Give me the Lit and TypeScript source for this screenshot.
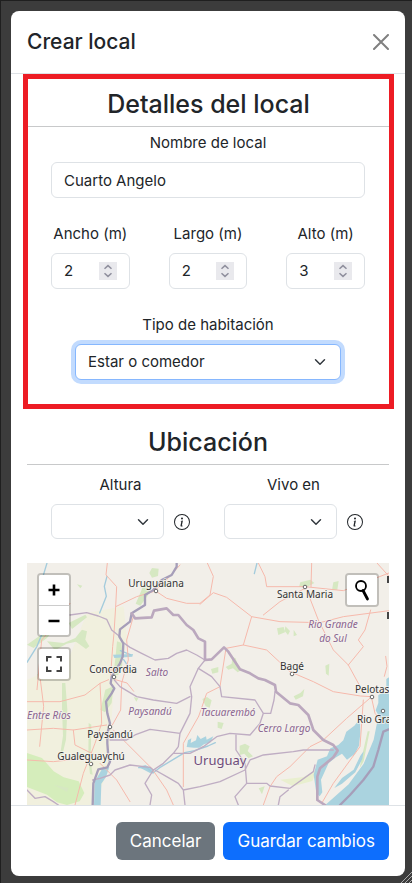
import { LitElement, html, svg, css } from "lit";
import { customElement, property } from "lit/decorators.js";

const base = css`
  *, *::before, *::after { box-sizing: border-box; }
  button, input, select { font: inherit; color: inherit; margin: 0; }
`;

@customElement("number-field")
class NumberField extends LitElement {
  @property() label = "";
  @property() value = "";

  static styles = [base, css`
    :host { display: flex; flex-direction: column; align-items: center; gap: 7px; min-width: 0; }
    .label { line-height: 24px; white-space: nowrap; }
    .box {
      display: flex; align-items: center; width: 100%; height: 36px; padding: 0 12px;
      border: 1px solid #dee2e6; border-radius: 6px; background: #fff;
    }
    .input {
      flex: 1; min-width: 0; width: 0; padding: 0; border: 0; outline: 0; background: none;
      appearance: textfield; -moz-appearance: textfield;
    }
    .input::-webkit-inner-spin-button { appearance: none; margin: 0; }
    .spin { display: block; width: 18px; height: 18px; background: #e9e9ed; }
  `];

  render() {
    return html`
      <label class="label" for="n">${this.label}</label>
      <div class="box">
        <input class="input" id="n" type="number" .value=${this.value} />
        <svg class="spin" viewBox="0 0 18 18" fill="none" stroke="#8f8f9d" stroke-width="1.5" aria-hidden="true">
          <path d="M5.5 6.8 9 3.6l3.5 3.2M5.5 11.2 9 14.4l3.5-3.2" />
        </svg>
      </div>
    `;
  }
}

@customElement("info-select")
class InfoSelect extends LitElement {
  @property() label = "";

  static styles = [base, css`
    :host { display: grid; grid-template-columns: 1fr 16px; column-gap: 10px; row-gap: 7px; align-items: center; }
    .label { grid-column: 1 / -1; text-align: center; line-height: 24px; }
    .select {
      width: 100%; height: 35px; padding: 0 36px 0 12px; appearance: none;
      border: 1px solid #dee2e6; border-radius: 6px;
      background: #fff url("data:image/svg+xml,%3Csvg xmlns='http://www.w3.org/2000/svg' viewBox='0 0 16 16'%3E%3Cpath fill='none' stroke='%23343a40' stroke-linecap='round' stroke-linejoin='round' stroke-width='2' d='m2 5 6 6 6-6'/%3E%3C/svg%3E") no-repeat right 12px center / 16px 12px;
    }
    .info { display: block; width: 16px; height: 16px; }
  `];

  render() {
    return html`
      <label class="label" for="s">${this.label}</label>
      <select class="select" id="s"><option></option></select>
      <svg class="info" viewBox="0 0 16 16" fill="#212529" aria-hidden="true">
        <path d="M8 15A7 7 0 1 1 8 1a7 7 0 0 1 0 14m0 1A8 8 0 1 0 8 0a8 8 0 0 0 0 16" />
        <path d="m8.930 6.588-2.290.287-.082.380.450.083c.294.070.352.176.288.469l-.738 3.468c-.194.897.105 1.319.808 1.319.545 0 1.178-.252 1.465-.598l.088-.416c-.200.176-.492.246-.686.246-.275 0-.375-.193-.304-.533zM9 4.500a1 1 0 1 1-2 0 1 1 0 0 1 2 0" />
      </svg>
    `;
  }
}

const places: [number, number, string, string][] = [
  [129, 24, "town", "Uruguaiana"],
  [278, 35, "town", "Santa Maria"],
  [265, 107, "town", "Bagé"],
  [86, 110, "town", "Concordia"],
  [83, 175, "town", "Paysandú"],
  [64, 197, "town", "Gualeguaychú"],
  [328, 130, "town start", "Pelotas"],
  [330, 160, "town start", "Rio Grande"],
  [306, 65, "region", "Rio Grande"],
  [306, 79, "region", "do Sul"],
  [130, 113, "region", "Salto"],
  [123, 152, "region", "Paysandú"],
  [201, 153, "region", "Tacuarembó"],
  [257, 169, "region", "Cerro Largo"],
  [0, 156, "region start", "Entre Ríos"],
  [193, 202, "country", "Uruguay"],
];

const dots: [number, number][] = [[129, 28], [278, 24], [265, 111], [87, 114], [83, 164], [64, 201], [345, 134], [356, 148]];

@customElement("area-map")
class AreaMap extends LitElement {
  static styles = [base, css`
    :host { display: grid; position: relative; overflow: hidden; background: #f2efe9; }
    .map { display: block; width: 100%; height: 100%; min-height: 242px; }
    .line { fill: none; stroke-linejoin: round; stroke-linecap: round; }
    .road { stroke: #f6b9ac; stroke-width: 3; }
    .dept { stroke: #bfadc3; stroke-width: 4; }
    .border { stroke: #bba8be; stroke-width: 8; }
    .river { stroke: #a69eb9; stroke-width: 7; }
    .stream { stroke: #a3cbdc; stroke-width: 4; }
    .water { fill: #aad3df; }
    .town, .region, .country { font-family: "Noto Sans", sans-serif; font-size: 10px; text-anchor: middle; paint-order: stroke; stroke: #f6f4f0; stroke-width: 2px; stroke-opacity: 0.7; fill: #333; }
    .region { font-style: italic; fill: #8b6590; }
    .country { font-size: 13px; fill: #6f4c7c; }
    .start { text-anchor: start; }
    .dot { fill: #fff; stroke: #666; }
    .tools { position: absolute; top: 10px; display: flex; flex-direction: column; gap: 10px; }
    .left { left: 10px; }
    .right { right: 10px; }
    .group { border: 2px solid rgba(0, 0, 0, 0.2); border-radius: 4px; background-clip: padding-box; overflow: hidden; }
    .tool { display: grid; place-items: center; width: 30px; height: 30px; padding: 0; border: 0; background: #fff; cursor: pointer; }
    .tool + .tool { border-top: 1px solid #ccc; }
  `];

  render() {
    return html`
      <svg class="map" viewBox="0 0 362 242" preserveAspectRatio="xMinYMin slice" role="img" aria-label="Mapa">
        <g transform="scale(.33333)">
          <path fill="#f1f0de" d="M0 350 120 300 180 150 290 130 300 230 285 300 260 380 250 520 245 620 200 726H0Z" />
          <g fill="#d6e8c2">
            <path fill="#d5edbb" d="M0 570 45 585 80 625 110 643 155 655 172 690 158 715 120 726 90 718 60 695 0 672Z" />
            <path d="M80 665l45 10-5 12zM60 235l50 5 35-15 20-25 15 5-5 25 12 20-10 8-30-22-28 6-35 20zM30 335l60-40 35-20-10 25-50 30-20 20zM0 245l50-35 30-10-20 25-40 30zM125 180l50-25 5 8-45 35z" />
            <path d="M105 360l10 0 6 80-4 90-12 50-6-2 9-60-3-80zM185 480l8 5-2 110 6 40-8-2-5-50z" />
            <path d="M375 15l20 2-2 22-18 5-8-14zM350 65l20 5-8 28-22 30-14-6 14-32zM270 235l14 5 2 65-12 30-15 2 6-50zM235 380l24-10-5 50-20 28-14-8 8-30z" />
            <path d="M820 58l30-8 12 10-22 12-24 0zM919 58l16-4-4 26-16 2zM750 196l20-4 4 16-20 8zM775 190l14 14-6 12-10-12zM800 200l10 16-10 4zM895 308l12-6-2 36-8-6zM552 318l22-6 0 16-18 4zM596 312l18-10 2-20 10 4 8 26 8 10-10 6-14-12-14 4zM638 548l16-6 14 8-6 14 16 16-14 6-12-14-14 4zM572 476l18 4-6 18-12-4zM526 408l14-6 14 10-6 22-12-4zM800 400l20-10 12-12-4 22-22 10zM320 402l14 4-6 10zM1022 505l6 0-18 90-12 20 8-40zM150 64l16 4-6 8zM695 676l18-6-8 24z" />
            <path fill="#e9efcf" d="M760 650l70-8 40-22-14 34-58 16z" />
          </g>
          <g class="water">
            <path d="M999 468 982 488 958 506 949 532 934 546 910 556 900 580 872 590 860 635 868 690 878 700 886 688 882 650 905 600 925 584 945 572 960 590 984 572 996 548 1000 510Z" />
            <path d="M1086 460 1050 480 1040 530 1010 602 965 664 895 726H1086Z" />
            <path d="M1054 396 1070 388 1086 392V462L1064 474 1046 442 1054 420Z" />
            <path d="M1010 565 1000 578 980 620 945 645 922 675 945 662 985 628 1006 588Z" />
            <path d="M479 552l4-20 10-6-2 14 16-8 4-16 10 12 16-8 2 10 20-10-8 18-20 6-14 10-16 0zM335 612l20-6 18 10 12 12-16 2zM225 618l22-6-10 30-14 20-2 64h-20l2-70zM258 275l60-2-2 8-54 4zM1078 348l8-5v28h-8z" />
          </g>
          <g class="line stream">
            <path d="M60 0 48 40 40 100 50 200 30 250 0 298M335 614l25 0 18 16 20-16 50-30 25-15 30-6 40-14 22-10M240 40l-8 30 6 30-20 50M690 0l-8 32M310 275l-30-12M290 290l12 18" />
          </g>
          <g class="line road">
            <path d="M241 0 237 36 269 71 266 131 261 211 257 251 251 336M266 131 329 101 379 86 409 61 459 6M389 86 419 106 479 121 519 121 549 96 559 40 541 0M319 161 299 231 304 291 284 360 281 441 256 486M129 121 79 191 44 231 30 380M265 350 300 360 320 385" />
            <path d="M694 0 714 41 719 71 834 71 949 83 1086 30M854 0 852 71M1050 0 1086 40M519 124 559 89 599 103 674 161 759 176 879 179 949 161 1086 143M834 76 759 116 709 156M674 161 649 246 597 256 579 371 539 391 515 460M649 246 719 261 789 326 859 356 919 386 1000 399 1034 401M839 81 874 171 919 261 964 306 1010 390M1031 141 1014 201 994 231 1009 251 964 306M1076 280l4 30-8 30" />
            <path d="M0 416 99 416 174 396 219 361 245 350M219 361 222 420 224 481 204 541 169 631 144 726M0 501 79 496 139 501 239 486M139 501 144 546 204 576M259 501 299 541 374 616 419 681 439 726M515 460 469 541 469 671M219 601 269 651 309 716M0 591 79 596 180 585M40 350l10 80-12 120" />
            <path d="M1034 401 959 466 889 531 849 551 789 611 749 641 729 671 709 726M1009 411 1004 481 999 551 919 661 884 721M1034 406 1044 451 1069 481" />
          </g>
          <g class="line dept">
            <path d="M129 156 179 149 214 159 239 169 254 201 279 221M289 239 309 253 344 271 384 291 424 286 449 271 479 261 509 276 534 291M534 291 514 316 489 371 494 401 489 451 459 511 454 551 439 571M262 351 279 371 329 401 379 411 449 421 489 401M249 531 299 531 324 516 369 499 459 511M197 651 219 646 249 636 264 621 309 606 369 613 379 621 409 601 439 571 489 571 529 551" />
            <path d="M379 621 354 661 374 696 369 726M384 621 419 641 454 661 469 681 474 726M469 681 519 671 579 656 654 621 669 591 709 576 799 566 829 561 919 561M514 316 554 341 579 371 584 401 684 411 709 451 731 451 741 411 744 386M709 451 699 481 669 516 609 511 569 521 529 551" />
            <path d="M627 516 627 561 654 601 659 661 624 701 634 726M659 661 719 661 729 669 789 676 859 626 864 606M784 681 759 701 754 726" />
            <path d="M0 681 24 706 54 701 79 716 94 726" />
          </g>
          <path class="line river" d="M449 0 449 11 434 36 404 51 379 81 354 96 354 126 314 151 309 176 279 199 277 221 289 241 287 281 279 301 254 341 251 361 262 376 254 391 237 416 241 451 249 481 241 511 241 541 244 581 249 596 241 613 214 619 199 661 197 726" />
          <path class="line border" d="M314 151 324 166 374 163 381 143 419 136 439 156 454 156 479 186 499 201 514 226 534 236 534 291 554 289 591 253 604 266 624 296 639 319 669 331 694 346 714 351 744 366 747 386 789 421 814 426 844 456 859 501 889 531 919 546 932 563 919 583 879 616 871 641 871 711 894 726" />
          <path class="line river" d="M1086 499 1069 506 1054 561 1039 611 1009 651 969 696 939 726" />
        </g>
        ${dots.map(([x, y]) => svg`<circle class="dot" cx=${x} cy=${y} r="1.8" />`)}
        ${places.map(([x, y, kind, name]) => svg`<text class=${kind} x=${x} y=${y}>${name}</text>`)}
        <path d="M361 13v7M361 49v7" stroke="#444" stroke-width="2" />
      </svg>
      <div class="tools left">
        <div class="group">
          <button class="tool" aria-label="Acercar"><svg width="12" height="12" viewBox="0 0 12 12"><path d="M6 .5v11M.5 6h11" stroke="#000" stroke-width="2.600" /></svg></button>
          <button class="tool" aria-label="Alejar"><svg width="12" height="12" viewBox="0 0 12 12"><path d="M.5 6h11" stroke="#000" stroke-width="2.600" /></svg></button>
        </div>
        <div class="group">
          <button class="tool" aria-label="Pantalla completa"><svg width="16" height="16" viewBox="0 0 16 16" fill="none" stroke="#444" stroke-width="2"><path d="M1 5.500V1h4.500M10.500 1H15v4.500M15 10.500V15h-4.500M5.500 15H1v-4.500" /></svg></button>
        </div>
      </div>
      <div class="tools right">
        <div class="group">
          <button class="tool" aria-label="Buscar"><svg width="18" height="22" viewBox="0 0 18 22" fill="none" stroke="#000"><circle cx="8" cy="7" r="5" stroke-width="1.800" /><path d="M10 11.500 14.500 20" stroke-width="2.800" stroke-linecap="round" /></svg></button>
        </div>
      </div>
    `;
  }
}

@customElement("app-root")
class AppRoot extends LitElement {
  static styles = [base, css`
    :host {
      display: flex; position: relative; min-height: 100vh; padding: 11px 7px 7px 11px;
      background: #3c3c3c; box-shadow: inset 1px 1px 0 #1f1f1f;
      box-sizing: border-box; color: #212529;
      font-family: Inter, sans-serif; font-size: 15px; line-height: 24px;
    }
    .dialog { flex: 1; min-width: 0; display: flex; flex-direction: column; background: #fff; border-radius: 8px; }
    .header {
      display: flex; align-items: center; justify-content: space-between;
      height: 63px; padding: 0 16px; border-bottom: 1px solid #dee2e6;
    }
    .title { margin: 0; font-size: 21px; font-weight: 500; line-height: 30px; }
    .close { display: grid; place-items: center; width: 16px; height: 16px; padding: 0; border: 0; background: none; cursor: pointer; }
    .body { flex: 1; display: flex; flex-direction: column; padding: 0 16px; }
    .details { margin: 0 -5px 0 -4px; padding-bottom: 24px; border: 5px solid #ed1c24; }
    .heading {
      margin: 0; padding: 10px 0 7px; border-bottom: 1px solid #c8c9ca;
      font-size: 25px; font-weight: 500; line-height: 30px; text-align: center;
    }
    .fields { display: flex; flex-direction: column; gap: 24px; padding: 4px 24px 0 23px; }
    .field { display: flex; flex-direction: column; align-items: center; gap: 7px; }
    .input { width: 100%; height: 36px; padding: 0 12px; border: 1px solid #dee2e6; border-radius: 6px; outline: 0; }
    .sizes { display: grid; grid-template-columns: repeat(3, 1fr); gap: 39px; }
    .kind { padding: 0 24px; }
    .select {
      width: 100%; height: 36px; padding: 0 36px 0 12px; appearance: none; outline: 0;
      border: 1px solid #86b7fe; border-radius: 6px; box-shadow: 0 0 0 4px #c2dbfe;
      background: #fff url("data:image/svg+xml,%3Csvg xmlns='http://www.w3.org/2000/svg' viewBox='0 0 16 16'%3E%3Cpath fill='none' stroke='%23343a40' stroke-linecap='round' stroke-linejoin='round' stroke-width='2' d='m2 5 6 6 6-6'/%3E%3C/svg%3E") no-repeat right 12px center / 16px 12px;
    }
    .place { flex: 1; display: flex; flex-direction: column; padding-top: 8px; }
    .pair { display: grid; grid-template-columns: 1fr 1fr; gap: 34px; padding: 8px 26px 24px 24px; }
    .map { flex: 1; }
    .footer { display: flex; justify-content: flex-end; gap: 8px; padding: 16px; border-top: 1px solid #dee2e6; }
    .button { height: 38px; padding: 0 14px; border: 0; border-radius: 6px; color: #fff; font-size: 17px; cursor: pointer; }
    .secondary { background: #6c757d; }
    .primary { background: #0d6efd; }
    .grip { position: absolute; right: 0; bottom: 0; width: 12px; height: 12px; }
  `];

  render() {
    return html`
      <div class="dialog" role="dialog" aria-labelledby="title">
        <header class="header">
          <h1 class="title" id="title">Crear local</h1>
          <button class="close" aria-label="Cerrar">
            <svg width="16" height="16" viewBox="0 0 16 16" stroke="#808080" stroke-width="2" stroke-linecap="round"><path d="m1 1 14 14M15 1 1 15" /></svg>
          </button>
        </header>
        <main class="body">
          <section class="details">
            <h2 class="heading">Detalles del local</h2>
            <div class="fields">
              <div class="field">
                <label for="name">Nombre de local</label>
                <input class="input" id="name" type="text" value="Cuarto Angelo" />
              </div>
              <div class="sizes">
                <number-field label="Ancho (m)" value="2"></number-field>
                <number-field label="Largo (m)" value="2"></number-field>
                <number-field label="Alto (m)" value="3"></number-field>
              </div>
              <div class="field kind">
                <label for="kind">Tipo de habitación</label>
                <select class="select" id="kind"><option>Estar o comedor</option></select>
              </div>
            </div>
          </section>
          <section class="place">
            <h2 class="heading">Ubicación</h2>
            <div class="pair">
              <info-select label="Altura"></info-select>
              <info-select label="Vivo en"></info-select>
            </div>
            <area-map class="map"></area-map>
          </section>
        </main>
        <footer class="footer">
          <button class="button secondary">Cancelar</button>
          <button class="button primary">Guardar cambios</button>
        </footer>
      </div>
      <svg class="grip" viewBox="0 0 12 12" stroke="#aaa" aria-hidden="true"><path d="M1 12 12 1M5 12l7-7M9 12l3-3" /></svg>
    `;
  }
}
